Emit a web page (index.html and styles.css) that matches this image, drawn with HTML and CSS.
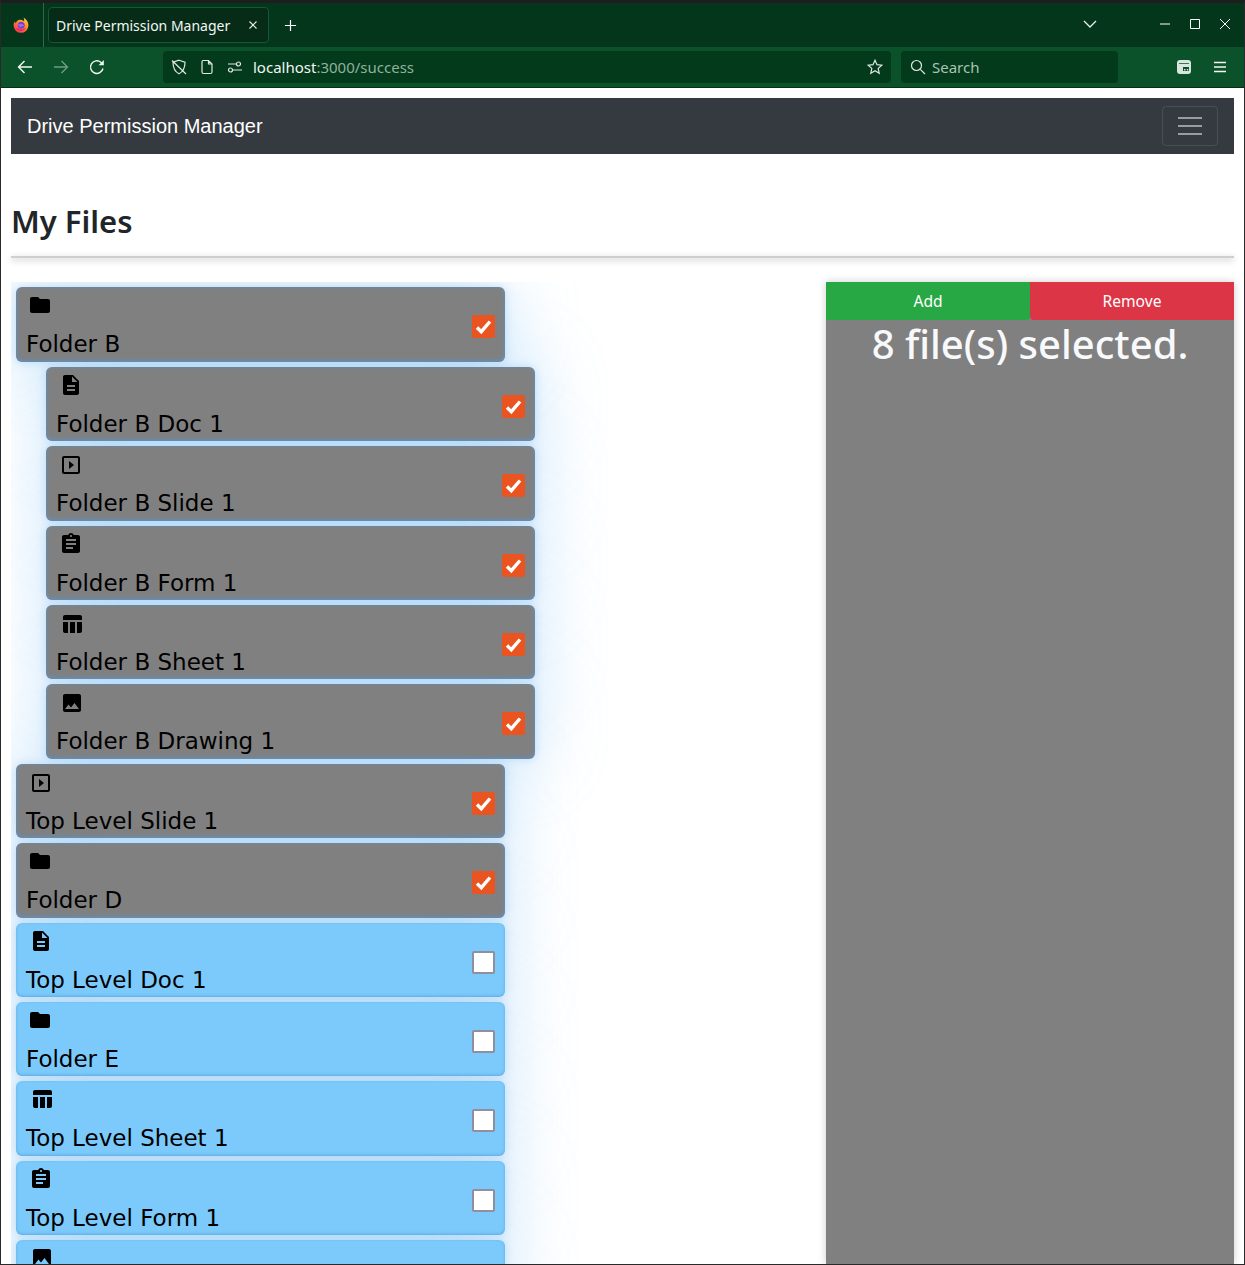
FILE: index.html
```html
<!DOCTYPE html>
<html lang="en">
<head>
<meta charset="utf-8">
<title>Drive Permission Manager</title>
<link rel="stylesheet" href="styles.css">
</head>
<body>
<svg class="defs" width="0" height="0" aria-hidden="true">
  <defs>
    <linearGradient id="fx-grad" x1="0.85" y1="0" x2="0.2" y2="1">
      <stop offset="0" stop-color="#ffd23a"/>
      <stop offset=".45" stop-color="#ff8a2a"/>
      <stop offset="1" stop-color="#f5305f"/>
    </linearGradient>
  </defs>
  <symbol id="i-folder" viewBox="0 0 24 24"><path d="M10 4H4c-1.1 0-1.99.9-1.99 2L2 18c0 1.1.9 2 2 2h16c1.1 0 2-.9 2-2V8c0-1.1-.9-2-2-2h-8l-2-2z"/></symbol>
  <symbol id="i-doc" viewBox="0 0 24 24"><path d="M14 2H6c-1.1 0-1.99.9-1.99 2L4 20c0 1.1.89 2 1.99 2H18c1.1 0 2-.9 2-2V8l-6-6zm2 16H8v-2h8v2zm0-4H8v-2h8v2zm-3-5V3.5L18.5 9H13z"/></symbol>
  <symbol id="i-slide" viewBox="0 0 24 24"><path d="M10 8v8l5-4-5-4zm9-5H5c-1.1 0-2 .9-2 2v14c0 1.1.9 2 2 2h14c1.1 0 2-.9 2-2V5c0-1.1-.9-2-2-2zm0 16H5V5h14v14z"/></symbol>
  <symbol id="i-form" viewBox="0 0 24 24"><path d="M19 3h-4.18C14.4 1.84 13.3 1 12 1c-1.3 0-2.4.84-2.82 2H5c-1.1 0-2 .9-2 2v14c0 1.1.9 2 2 2h14c1.1 0 2-.9 2-2V5c0-1.1-.9-2-2-2zm-7 0c.55 0 1 .45 1 1s-.45 1-1 1-1-.45-1-1 .45-1 1-1zm2 14H7v-2h7v2zm3-4H7v-2h10v2zm0-4H7V7h10v2z"/></symbol>
  <symbol id="i-sheet" viewBox="0 0 24 24"><path d="M10 10.02h5V21h-5zM17 21h3c1.1 0 2-.9 2-2v-9h-5v11zm3-18H5c-1.1 0-2 .9-2 2v3h19V5c0-1.1-.9-2-2-2zM3 19c0 1.1.9 2 2 2h3V10H3v9z"/></symbol>
  <symbol id="i-draw" viewBox="0 0 24 24"><path d="M21 19V5c0-1.1-.9-2-2-2H5c-1.1 0-2 .9-2 2v14c0 1.1.9 2 2 2h14c1.1 0 2-.9 2-2zM8.5 13.5l2.5 3.01L14.5 12l4.5 6H5l3.5-4.5z"/></symbol>
  <symbol id="i-check" viewBox="0 0 23 23"><path d="M5 12.500l4.300 4.200 8.700-10.200" fill="none" stroke="#fff" stroke-width="3.400"/></symbol>
</svg>

<header class="tabbar">
  <div class="fx-slot">
    <svg class="fx-logo" viewBox="0 0 16 16"><path d="M10.500 .5c2.900 1.600 4.900 4.500 4.900 7.900a7.400 7.400 0 1 1-14.800 0c0-1.500.4-3 1.300-4.200.1.900.4 1.500.9 2C3.400 4 5 2.700 7 2.700c1.700 0 3.100.5 4.100 1.600C11.300 2.900 11 1.600 10.500 .5z" fill="url(#fx-grad)"/><circle cx="8.200" cy="8.300" r="3.500" fill="#7b3fd0"/><path d="M5 7.200h4.500l1.500 1.300-2 1-2.500.2z" fill="#b06ae8"/><path d="M2.200 10c1.200 2.800 3.700 4.200 6.200 4 2.200-.2 3.900-1.400 4.900-3.400-1.700 1.500-3.700 2-5.500 1.700C5.200 12 3.400 11.300 2.200 10z" fill="#f0245f"/></svg>
  </div>
  <div class="tab">
    <span class="tab-title">Drive Permission Manager</span>
    <svg class="tab-close" viewBox="0 0 10 10"><path d="M1.500 1.500l7 7M8.500 1.500l-7 7"/></svg>
  </div>
  <svg class="plus" viewBox="0 0 14 14"><path d="M7 1v12M1 7h12"/></svg>
  <div class="tabbar-right">
    <svg class="chev" viewBox="0 0 14 8"><path d="M1 1l6 6 6-6"/></svg>
    <svg class="win win-min" viewBox="0 0 12 12"><path d="M1 6h10"/></svg>
    <svg class="win win-max" viewBox="0 0 12 12"><path d="M1.500 1.500h9v9h-9z"/></svg>
    <svg class="win win-x" viewBox="0 0 12 12"><path d="M1 1l10 10M11 1L1 11"/></svg>
  </div>
</header>

<nav class="toolbar">
  <svg class="tool tool-back" viewBox="0 0 16 16"><path d="M15 8H1.500M7.500 2L1.500 8l6 6"/></svg>
  <svg class="tool tool-fwd" viewBox="0 0 16 16"><path d="M1 8h13.500M8.500 2l6 6-6 6"/></svg>
  <svg class="tool tool-reload" viewBox="0 0 16 16"><path d="M14 9.500A6.300 6.300 0 1 1 11.800 3.200L14 5.500"/><path class="solid" d="M14.800 1v5.200H9.600z"/></svg>
  <div class="urlbar">
    <svg class="url-ico shield" viewBox="0 0 16 16"><path d="M8 1.200l6 2c0 5-1.500 9.300-6 11.600C3.500 12.500 2 8.200 2 3.200zM1 1.500l14 13.500"/></svg>
    <svg class="url-ico page" viewBox="0 0 16 16"><path d="M4 1.500h5.500L13 5v8a1.500 1.500 0 0 1-1.500 1.500h-7A1.500 1.500 0 0 1 3 13V3a1.500 1.500 0 0 1 1-1.500zM9.500 1.500V5H13"/></svg>
    <svg class="url-ico perm" viewBox="0 0 16 16"><circle cx="11.500" cy="5" r="2"/><circle cx="3.500" cy="11" r="2"/><path d="M1 5h8M6 11h9"/></svg>
    <span class="url-text">localhost<span class="url-dim">:3000/success</span></span>
    <svg class="url-ico star" viewBox="0 0 16 16"><path d="M8 1.300l2 4.400 4.800.5-3.600 3.200 1 4.800L8 11.800l-4.200 2.400 1-4.800-3.600-3.200 4.800-.5z"/></svg>
  </div>
  <div class="searchbar">
    <svg class="url-ico mag" viewBox="0 0 16 16"><circle cx="6.500" cy="6.500" r="5"/><path d="M10.300 10.300L15 15"/></svg>
    <span class="search-text">Search</span>
  </div>
  <svg class="tool tool-tabs" viewBox="0 0 16 16"><rect x="1" y="1" width="14" height="14" rx="3" fill="#d8e6de"/><path class="dark" d="M3 4h10v.8H3zM7 8h6v4H7z"/><rect x="8" y="10" width="1.500" height="1.500" fill="#d8e6de"/><rect x="10.800" y="10" width="1.500" height="1.500" fill="#d8e6de"/></svg>
  <svg class="tool tool-menu" viewBox="0 0 16 16"><path d="M2 3.500h12M2 8h12M2 12.500h12"/></svg>
</nav>

<main class="page">
  <div class="navbar">
    <span class="brand">Drive Permission Manager</span>
    <button class="toggler" type="button" aria-label="Toggle navigation"><span class="bars"></span></button>
  </div>
  <h1 class="title">My Files</h1>
  <hr class="rule">
  <div class="columns">
    <div class="list-col">
      <div class="item on"><div class="item-main"><svg class="ico i-wide"><use href="#i-folder"/></svg><div class="name">Folder B</div></div><span class="check on"><svg><use href="#i-check"/></svg></span></div>
      <div class="item on sub"><div class="item-main"><svg class="ico"><use href="#i-doc"/></svg><div class="name">Folder B Doc 1</div></div><span class="check on"><svg><use href="#i-check"/></svg></span></div>
      <div class="item on sub"><div class="item-main"><svg class="ico i-low"><use href="#i-slide"/></svg><div class="name">Folder B Slide 1</div></div><span class="check on"><svg><use href="#i-check"/></svg></span></div>
      <div class="item on sub"><div class="item-main"><svg class="ico"><use href="#i-form"/></svg><div class="name">Folder B Form 1</div></div><span class="check on"><svg><use href="#i-check"/></svg></span></div>
      <div class="item on sub"><div class="item-main"><svg class="ico i-right i-low"><use href="#i-sheet"/></svg><div class="name">Folder B Sheet 1</div></div><span class="check on"><svg><use href="#i-check"/></svg></span></div>
      <div class="item on sub"><div class="item-main"><svg class="ico i-right i-low"><use href="#i-draw"/></svg><div class="name">Folder B Drawing 1</div></div><span class="check on"><svg><use href="#i-check"/></svg></span></div>
      <div class="item on"><div class="item-main"><svg class="ico i-low"><use href="#i-slide"/></svg><div class="name">Top Level Slide 1</div></div><span class="check on"><svg><use href="#i-check"/></svg></span></div>
      <div class="item on"><div class="item-main"><svg class="ico i-wide"><use href="#i-folder"/></svg><div class="name">Folder D</div></div><span class="check on"><svg><use href="#i-check"/></svg></span></div>
      <div class="item"><div class="item-main"><svg class="ico"><use href="#i-doc"/></svg><div class="name">Top Level Doc 1</div></div><span class="check"></span></div>
      <div class="item"><div class="item-main"><svg class="ico i-wide"><use href="#i-folder"/></svg><div class="name">Folder E</div></div><span class="check"></span></div>
      <div class="item"><div class="item-main"><svg class="ico i-right"><use href="#i-sheet"/></svg><div class="name">Top Level Sheet 1</div></div><span class="check"></span></div>
      <div class="item"><div class="item-main"><svg class="ico"><use href="#i-form"/></svg><div class="name">Top Level Form 1</div></div><span class="check"></span></div>
      <div class="item"><div class="item-main"><svg class="ico i-right"><use href="#i-draw"/></svg></div><span class="check"></span></div>
    </div>
    <aside class="side">
      <div class="actions">
        <button class="act act-add" type="button">Add</button>
        <button class="act act-remove" type="button">Remove</button>
      </div>
      <div class="count">8 file(s) selected.</div>
    </aside>
  </div>
</main>
</body>
</html>
```
FILE: styles.css
```css
* { box-sizing: border-box; }
html, body { margin: 0; height: 100%; }
body {
  width: 1245px;
  height: 1265px;
  overflow: hidden;
  background: #fff;
  border: 1px solid #2a2a2a;
  border-top: 3px solid #1e1e1e;
  display: flex;
  flex-direction: column;
  font-family: "Noto Sans", sans-serif;
}
.defs { position: absolute; }

/* browser chrome */
.tabbar {
  flex: none;
  height: 44px;
  background: #03361a;
  display: flex;
  align-items: center;
  color: #fff;
}
.fx-slot {
  width: 43px;
  height: 44px;
  border-right: 1px solid #2f6a49;
  display: flex;
  align-items: center;
  padding-left: 12px;
}
.fx-logo { width: 16px; height: 16px; margin-top: -1px; }
.tab {
  margin-left: 4px;
  width: 221px;
  height: 36px;
  background: #062c17;
  border: 1px solid #14573a;
  border-radius: 4px;
  display: flex;
  align-items: center;
  padding: 0 10px 0 7px;
  justify-content: space-between;
}
.tab-title { font-size: 14px; color: #f2f7f4; white-space: nowrap; }
.tab-close { width: 10px; height: 10px; fill: none; stroke: #e6eee9; stroke-width: 1.1; }
.plus { width: 13px; height: 13px; margin-left: 15px; fill: none; stroke: #fff; stroke-width: 1.3; }
.tabbar-right { margin-left: auto; display: flex; align-items: center; }
.chev { width: 14px; height: 8px; fill: none; stroke: #e8efeb; stroke-width: 1.3; margin-right: 62px; margin-top: -2px; }
.win { width: 12px; height: 12px; fill: none; stroke: #fff; stroke-width: 1; margin-right: 18px; margin-top: -2px; }
.win-x { margin-right: 13px; }

.toolbar {
  flex: none;
  height: 41px;
  background: #0b5129;
  border-bottom: 1px solid #04301a;
  display: flex;
  align-items: center;
}
.tool { width: 16px; height: 16px; fill: none; stroke: #f2f7f4; stroke-width: 1.4; }
.tool-back { margin-left: 16px; }
.tool-fwd { margin-left: 20px; stroke: #6f9c83; }
.tool-reload { margin-left: 20px; }
.tool-reload .solid { fill: #f2f7f4; stroke: none; }
.tool-tabs { margin-left: 58px; stroke: none; }
.tool-tabs .dark { fill: #0b5129; }
.tool-menu { margin-left: 20px; }
.urlbar, .searchbar {
  height: 32px;
  background: #033a1b;
  border-radius: 4px;
  display: flex;
  align-items: center;
  margin-top: -1px;
}
.urlbar { margin-left: 58px; width: 728px; padding-left: 8px; }
.searchbar { margin-left: 10px; width: 217px; padding-left: 9px; }
.url-ico { width: 16px; height: 16px; fill: none; stroke: #dfe8e3; stroke-width: 1.2; flex: none; }
.page { margin-left: 12px; }
.perm { margin-left: 12px; }
.url-text { margin: 1px 0 0 10px; font-size: 15px; color: #f2f7f4; }
.url-dim { color: #8fb19e; }
.star { margin-left: auto; margin-right: 8px; }
.search-text { margin: 1px 0 0 6px; font-size: 15px; color: #a9c4b5; }

/* page */
main.page { margin: 0; flex: 1; min-height: 0; padding: 10px 10px 0; display: flex; flex-direction: column; }
.navbar {
  flex: none;
  height: 56px;
  background: #343a40;
  display: flex;
  align-items: center;
  justify-content: space-between;
  padding: 0 16px;
}
.brand { font-family: "Liberation Sans", Arial, sans-serif; font-size: 20px; color: #fff; }
.toggler {
  width: 56px;
  height: 40px;
  background: transparent;
  border: 1px solid rgba(255,255,255,.1);
  border-radius: 4px;
  display: flex;
  align-items: center;
  justify-content: center;
  padding: 0;
}
.bars {
  width: 24px;
  height: 18px;
  background: linear-gradient(rgba(255,255,255,.5) 0 2px, transparent 2px 8px, rgba(255,255,255,.5) 8px 10px, transparent 10px 16px, rgba(255,255,255,.5) 16px 18px);
}
.title { flex: none; margin: 48px 0 1px; font-size: 31px; line-height: 38px; font-weight: 600; color: #212529; }
.rule { flex: none; width: 100%; margin: 15px 0 0; height: 2px; border: 0; background: #cfcfcf; box-shadow: 0 2px 6px rgba(0,0,0,.32); }
.columns { flex: 1; min-height: 0; margin-top: 24px; display: grid; grid-template-columns: 815px 408px; }
.list-col { overflow: hidden; padding: .4px 0 0 5px; min-height: 0; isolation: isolate; }
.item {
  position: relative;
  width: 489px;
  height: 74.4px;
  margin-top: 5px;
  padding: 6px 10px 0;
  border-radius: 6px;
  background: #7bcafb;
  display: flex;
  box-shadow: inset 0 -1px 3px rgba(60,130,200,.45);
}
.item::before {
  content: "";
  position: absolute;
  inset: 0;
  z-index: -1;
  border-radius: 6px;
  box-shadow: 0 0 70px rgba(122,190,245,.42), 0 0 10px rgba(110,175,235,.35);
}
.item.on { background: #808080; box-shadow: inset 0 -1px 4px rgba(85,150,215,.85); }
.item.sub { margin-left: 30px; }
.item-main { flex: 1; min-width: 0; }
.ico { display: block; width: 24px; height: 24px; margin-left: 3px; fill: #000; }
.i-wide { margin-left: 2px; }
.i-right { margin-left: 4px; }
.i-low { margin-top: 1px; margin-bottom: -1px; }
.name { margin-top: 12.1px; font-family: "DejaVu Sans", sans-serif; font-size: 23px; line-height: 30px; color: #000; white-space: nowrap; }
.check {
  flex: none;
  align-self: center;
  width: 23px;
  height: 23px;
  margin-top: -1.4px;
  border-radius: 2px;
  background: #fff;
  border: 2px solid #8f8f9d;
}
.check.on { background: #e95420; border: 0; }
.check svg { display: block; width: 23px; height: 23px; }

.side { background: #808080; box-shadow: 0 0 8px rgba(0,0,0,.2); min-height: 0; }
.actions { display: flex; }
.act { flex: 1; height: 38px; border: 0; color: #fff; font-family: "Noto Sans", sans-serif; font-size: 15.6px; padding: 0; }
.act-add { background: #28a745; border-radius: 0 0 4px 0; }
.act-remove { background: #dc3545; border-radius: 0 0 0 4px; }
.count { text-align: center; color: #f8f9fa; font-size: 40px; line-height: 48px; font-weight: 500; }
```
